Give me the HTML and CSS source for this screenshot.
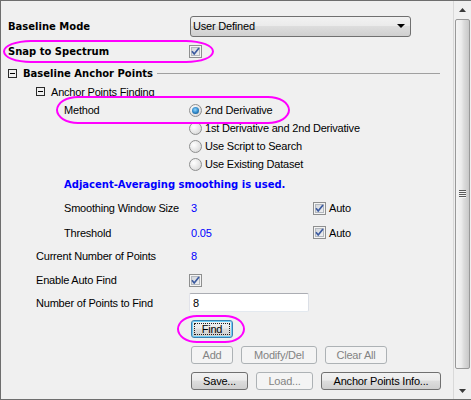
FILE: index.html
```html
<!DOCTYPE html>
<html>
<head>
<meta charset="utf-8">
<link rel="stylesheet" href="styles.css">
</head>
<body>
<div class="panel">
  <div class="content">
    <div class="row h-mode">
      <div class="label lv0 strong">Baseline Mode</div>
      <div class="select"><span class="select-text">User Defined</span><span class="select-arrow"></span></div>
    </div>
    <div class="row h-snap">
      <div class="label lv0 strong">Snap to Spectrum</div>
      <span class="check"><svg class="tick" width="11" height="11" viewBox="0 0 11 11"><path d="M2 5.3 L4.2 8 L9 2" fill="none" stroke="#3b5aa0" stroke-width="1.7"/></svg></span>
    </div>
    <div class="row h18 group-0">
      <span class="expander"></span><span class="strong group-title">Baseline Anchor Points</span><span class="rule"></span>
    </div>
    <div class="row h19 group-1">
      <span class="expander"></span><span class="group-title">Anchor Points Finding</span>
    </div>
    <div class="row h18">
      <div class="label lv2">Method</div>
      <span class="radio"><span class="dot"></span></span><span class="opt">2nd Derivative</span>
    </div>
    <div class="row h18">
      <div class="label"></div>
      <span class="radio"></span><span class="opt">1st Derivative and 2nd Derivative</span>
    </div>
    <div class="row h18">
      <div class="label"></div>
      <span class="radio"></span><span class="opt">Use Script to Search</span>
    </div>
    <div class="row h18">
      <div class="label"></div>
      <span class="radio"></span><span class="opt">Use Existing Dataset</span>
    </div>
    <div class="row h22">
      <div class="note">Adjacent-Averaging smoothing is used.</div>
    </div>
    <div class="row h26">
      <div class="label lv2">Smoothing Window Size</div>
      <div class="value">3</div>
      <span class="check"><svg class="tick" width="11" height="11" viewBox="0 0 11 11"><path d="M2 5.3 L4.2 8 L9 2" fill="none" stroke="#3b5aa0" stroke-width="1.7"/></svg></span>
      <span class="opt">Auto</span>
    </div>
    <div class="row h23">
      <div class="label lv2">Threshold</div>
      <div class="value">0.05</div>
      <span class="check"><svg class="tick" width="11" height="11" viewBox="0 0 11 11"><path d="M2 5.3 L4.2 8 L9 2" fill="none" stroke="#3b5aa0" stroke-width="1.7"/></svg></span>
      <span class="opt">Auto</span>
    </div>
    <div class="row h24">
      <div class="label lv1">Current Number of Points</div>
      <div class="value">8</div>
    </div>
    <div class="row h24">
      <div class="label lv1">Enable Auto Find</div>
      <span class="check"><svg class="tick" width="11" height="11" viewBox="0 0 11 11"><path d="M2 5.3 L4.2 8 L9 2" fill="none" stroke="#3b5aa0" stroke-width="1.7"/></svg></span>
    </div>
    <div class="row h21">
      <div class="label lv1">Number of Points to Find</div>
      <div class="field">8</div>
    </div>
    <div class="btn-row first">
      <div class="btn focus w42"><span class="focus-ring">Find</span></div>
    </div>
    <div class="btn-row">
      <div class="btn disabled w42">Add</div>
      <div class="btn disabled w76">Modify/Del</div>
      <div class="btn disabled w62">Clear All</div>
    </div>
    <div class="btn-row">
      <div class="btn w57">Save...</div>
      <div class="btn disabled w57">Load...</div>
      <div class="btn w120">Anchor Points Info...</div>
    </div>
  </div>
  <div class="scrollbar">
    <div class="sb-btn"><svg width="7" height="4" viewBox="0 0 7 4"><path d="M0 4 L3.5 0 L7 4 Z" fill="#3a3a3a"/></svg></div>
    <div class="sb-thumb"><span class="grip"></span></div>
    <div class="sb-track"></div>
    <div class="sb-btn"><svg width="7" height="4" viewBox="0 0 7 4"><path d="M0 0 L7 0 L3.5 4 Z" fill="#3a3a3a"/></svg></div>
  </div>
  <div class="mark mark-snap"></div>
  <div class="mark mark-method"></div>
  <div class="mark mark-find"></div>
</div>
</body>
</html>
```
FILE: styles.css
```css
html, body {
  margin: 0;
  padding: 0;
  background: #f0f0f0;
}
body {
  font-family: "Liberation Sans", Arial, sans-serif;
  font-size: 11px;
  letter-spacing: -0.2px;
  color: #000;
}
.panel {
  position: relative;
  width: 471px;
  height: 400px;
  box-sizing: border-box;
  border-left: 1px solid #6e6e6e;
  border-top: 1px solid #6e6e6e;
  border-bottom: 1px solid #6e6e6e;
  display: flex;
  background: #f0f0f0;
  overflow: hidden;
}
.content {
  flex: 1;
  padding-top: 13px;
}
.row {
  display: flex;
  align-items: center;
}
.h-mode { height: 24px; }
.h-snap { height: 26px; }
.h18 { height: 18px; }
.h19 { height: 19px; }
.h21 { height: 21px; }
.h22 { height: 22px; }
.h23 { height: 23px; }
.h24 { height: 24px; }
.h26 { height: 26px; }

.label {
  width: 188px;
  flex: none;
  box-sizing: border-box;
}
.lv0 { padding-left: 7px; }
.lv1 { padding-left: 35px; }
.lv2 { padding-left: 63px; }
.strong {
  font-family: "DejaVu Sans", Verdana, sans-serif;
  font-weight: bold;
  font-size: 10px;
  letter-spacing: 0;
}
.note {
  padding-left: 63px;
  font-family: "DejaVu Sans", Verdana, sans-serif;
  font-weight: bold;
  font-size: 10px;
  letter-spacing: 0;
  color: #0000ff;
}
.value {
  width: 124px;
  flex: none;
  box-sizing: border-box;
  padding-left: 2px;
  color: #0000ff;
}

/* dropdown */
.select {
  margin-left: 1px;
  width: 221px;
  height: 21px;
  box-sizing: border-box;
  border: 1px solid #707070;
  border-radius: 3px;
  background: linear-gradient(#f2f2f2 0%, #ebebeb 45%, #dddddd 50%, #cfcfcf 100%);
  display: flex;
  align-items: center;
}
.select-text { padding-left: 2px; }
.select-arrow {
  margin-left: auto;
  margin-right: 5px;
  width: 0;
  height: 0;
  border-left: 4px solid transparent;
  border-right: 4px solid transparent;
  border-top: 4px solid #000;
}

/* checkbox */
.check {
  flex: none;
  width: 13px;
  height: 13px;
  box-sizing: border-box;
  border: 1px solid #8e8f8f;
  background: linear-gradient(135deg, #cdd1d7, #f6f6f6);
  box-shadow: inset 0 0 0 1px #f4f4f4, inset 0 0 0 2px #b3b8be;
  display: flex;
}
.tick { display: block; }

/* radio */
.radio {
  flex: none;
  width: 13px;
  height: 13px;
  box-sizing: border-box;
  border-radius: 50%;
  border: 1px solid #8e8f8f;
  background: radial-gradient(circle at 35% 35%, #ffffff, #e6e6e6 55%, #cdcdcd);
  display: flex;
  align-items: center;
  justify-content: center;
}
.dot {
  width: 7px;
  height: 7px;
  border-radius: 50%;
  background: radial-gradient(circle at 45% 40%, #8ed6ff, #2a82c4 55%, #123d66);
}
.opt { margin-left: 3px; }
.check + .opt { margin-left: 3px; }

/* groups */
.group-0 { padding-left: 7px; }
.group-1 { padding-left: 35px; }
.expander {
  flex: none;
  width: 9px;
  height: 9px;
  box-sizing: border-box;
  border: 1px solid #2a2a2a;
  background: linear-gradient(#000, #000) center / 5px 1px no-repeat;
}
.group-title { margin-left: 6px; }
.rule {
  flex: 1;
  height: 1px;
  background: #a0a0a0;
  margin-left: 4px;
  margin-right: 13px;
}

/* text field */
.field {
  width: 120px;
  height: 19px;
  box-sizing: border-box;
  border: 1px solid;
  border-color: #abadb3 #dbdfe6 #e3e9ef #e2e3ea;
  border-radius: 2px;
  background: #fff;
  padding-left: 3px;
  display: flex;
  align-items: center;
}

/* buttons */
.btn-row {
  display: flex;
  gap: 8px;
  padding-left: 190px;
  margin-top: 8px;
}
.btn-row.first { margin-top: 7px; }
.btn {
  height: 18px;
  box-sizing: border-box;
  border: 1px solid #707070;
  border-radius: 3px;
  background: linear-gradient(#f2f2f2 0%, #ebebeb 45%, #dddddd 50%, #cfcfcf 100%);
  display: flex;
  align-items: center;
  justify-content: center;
  flex: none;
}
.btn.disabled {
  border-color: #adb2b5;
  background: #f4f4f4;
  color: #838383;
}
.btn.focus {
  border-color: #3c7fb1;
  box-shadow: inset 0 0 0 1px #6fd0f6;
  padding: 2px;
}
.focus-ring {
  width: 100%;
  height: 100%;
  box-sizing: border-box;
  border: 1px dotted #202020;
  display: flex;
  align-items: center;
  justify-content: center;
}
.w42 { width: 42px; }
.w57 { width: 57px; }
.w62 { width: 62px; }
.w76 { width: 76px; }
.w120 { width: 120px; }

/* scrollbar */
.scrollbar {
  width: 18px;
  flex: none;
  box-sizing: border-box;
  border-left: 1px solid #d9d9d9;
  background: #f0f0f0;
  display: flex;
  flex-direction: column;
}
.sb-btn {
  height: 17px;
  flex: none;
  display: flex;
  align-items: center;
  justify-content: center;
}
.sb-btn svg { display: block; }
.sb-thumb {
  margin: 1px 1px 0 1px;
  height: 350px;
  flex: none;
  box-sizing: border-box;
  border: 1px solid #999;
  border-radius: 2px;
  background: linear-gradient(to right, #f4f4f4 0%, #ececec 40%, #dcdcdc 60%, #c8c8c8 100%);
  display: flex;
  align-items: center;
  justify-content: center;
}
.grip {
  width: 7px;
  height: 8px;
  background: repeating-linear-gradient(#5a5a5a 0, #5a5a5a 1px, #f4f4f4 1px, #f4f4f4 2px);
}
.sb-track { flex: 1; }

/* annotation marks */
.mark {
  position: absolute;
  box-sizing: border-box;
  border: 2px solid #ff00ff;
}
.mark-snap {
  left: 2px;
  top: 39px;
  width: 211px;
  height: 23px;
  border-radius: 28px / 50%;
}
.mark-method {
  left: 55px;
  top: 95px;
  width: 234px;
  height: 28px;
  border-radius: 22px / 50%;
}
.mark-find {
  left: 176px;
  top: 314px;
  width: 68px;
  height: 28px;
  border-radius: 20px / 50%;
}
```
